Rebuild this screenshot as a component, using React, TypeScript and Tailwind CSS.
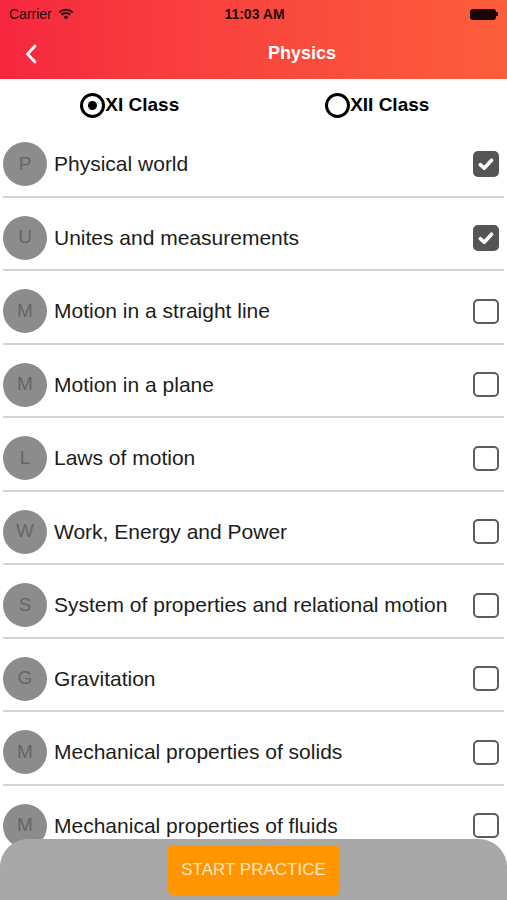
import React from "react";

const topics: { l: string; t: string; c: boolean }[] = [
  { l: "P", t: "Physical world", c: true },
  { l: "U", t: "Unites and measurements", c: true },
  { l: "M", t: "Motion in a straight line", c: false },
  { l: "M", t: "Motion in a plane", c: false },
  { l: "L", t: "Laws of motion", c: false },
  { l: "W", t: "Work, Energy and Power", c: false },
  { l: "S", t: "System of properties and relational motion", c: false },
  { l: "G", t: "Gravitation", c: false },
  { l: "M", t: "Mechanical properties of solids", c: false },
  { l: "M", t: "Mechanical properties of fluids", c: false },
];

function Check({ checked }: { checked: boolean }) {
  if (checked) {
    return (
      <div className="w-[26px] h-[26px] rounded-[5px] bg-[#555555] flex items-center justify-center">
        <svg width="18" height="18" viewBox="0 0 18 18">
          <path d="M3.3 9.6 L7.2 13.2 L14.6 5.2" fill="none" stroke="white" strokeWidth="3.6" strokeLinecap="round" strokeLinejoin="round" />
        </svg>
      </div>
    );
  }
  return <div className="w-[26px] h-[25px] rounded-[5px] border-2 border-[#5c5c5c] bg-white" />;
}

export default function App() {
  return (
    <div
      className="relative w-[507px] h-[900px] overflow-hidden bg-white"
      style={{ fontFamily: "'Liberation Sans', Arial, sans-serif" }}
    >
      {/* Header */}
      <div className="h-[79px] bg-gradient-to-r from-[#f6263f] to-[#fc5d3b]">
        <div className="relative h-[28px] flex items-center px-[9px] text-[14px] text-[#2a0a0e]">
          <span>Carrier</span>
          <svg className="ml-[6px]" width="16" height="12" viewBox="0 0 16 12">
            <path d="M8 11.5 L5.6 8.9 A3.4 3.4 0 0 1 10.4 8.9 Z" fill="#2a0a0e" />
            <path d="M3.6 6.8 A6.3 6.3 0 0 1 12.4 6.8" fill="none" stroke="#2a0a0e" strokeWidth="1.9" />
            <path d="M1.3 4.4 A9.6 9.6 0 0 1 14.7 4.4" fill="none" stroke="#2a0a0e" strokeWidth="1.9" />
          </svg>
          <span className="absolute left-[2px] right-0 text-center font-bold pointer-events-none">11:03 AM</span>
          <div className="ml-auto flex items-center">
            <div className="w-[26px] h-[11px] rounded-[3px] bg-[#1a0406]" />
            <div className="w-[2px] h-[4px] rounded-r-[1px] bg-[#1a0406]" />
          </div>
        </div>
        <div className="relative h-[51px] flex items-center">
          <svg className="ml-[24px]" width="14" height="20" viewBox="0 0 14 20">
            <path d="M11 2 L3.5 10 L11 18" fill="none" stroke="white" strokeWidth="2.8" strokeLinecap="round" strokeLinejoin="round" />
          </svg>
          <span className="absolute left-[268px] text-white text-[18px] font-bold">Physics</span>
        </div>
      </div>

      {/* Radio row */}
      <div className="grid grid-cols-2 h-[46px] items-center">
        <div className="flex items-center justify-center pl-[6px] pt-[6px]">
          <div className="w-[25px] h-[25px] rounded-full border-[3px] border-black flex items-center justify-center">
            <div className="w-[9px] h-[9px] rounded-full bg-black" />
          </div>
          <span className="text-[19px] font-bold text-black">XI Class</span>
        </div>
        <div className="flex items-center justify-center pr-[6px] pt-[6px]">
          <div className="w-[25px] h-[25px] rounded-full border-[3px] border-black" />
          <span className="text-[19px] font-bold text-black">XII Class</span>
        </div>
      </div>

      {/* List */}
      <div className="flex flex-col">
        {topics.map((it, i) => (
          <div key={i} className="flex flex-col h-[73.5px]">
            <div className="flex items-center pt-[17px] pl-[3px] pr-[8px]">
              <div className="w-[44px] h-[44px] rounded-full bg-[#8c8c8c] flex items-center justify-center text-[19px] text-[#666666]">
                {it.l}
              </div>
              <span className="ml-[7px] text-[21px] text-[#1c1c1c] flex-1 whitespace-nowrap">{it.t}</span>
              <Check checked={it.c} />
            </div>
            <div className="mt-auto mx-[3px] h-[2px] bg-[#d3d3d3] mb-[1px]" />
          </div>
        ))}
      </div>

      {/* Bottom bar */}
      <div className="absolute left-0 right-0 bottom-0 h-[61px] bg-[#a8a8a8] rounded-t-[28px] flex justify-center pt-[6px]">
        <button className="w-[172px] h-[50px] rounded-[5px] bg-[#ff9500] text-[#fde8c6] text-[17px]">
          START PRACTICE
        </button>
      </div>
    </div>
  );
}
